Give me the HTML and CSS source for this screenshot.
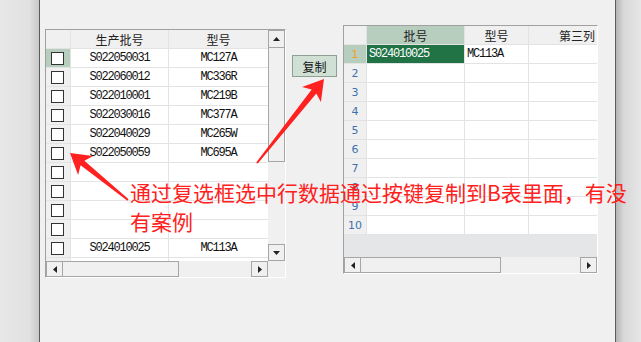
FILE: index.html
```html
<!DOCTYPE html>
<html lang="zh-CN">
<head>
    <meta charset="UTF-8">
    <meta name="viewport" content="width=device-width, initial-scale=1.0">
    <title>复制到B表</title>
    <link rel="stylesheet" href="styles.css">
</head>
<body>
<div class="shade-left"></div>
<div class="window">
    <!-- A表：带复选框 -->
    <div class="grid grid-a">
        <div class="grid-main">
            <div class="cells">
                <div class="row head">
                    <div class="rh"></div>
                    <div class="c c1">生产批号</div>
                    <div class="c c2">型号</div>
                </div>
                <div class="row">
                    <div class="rh current"><span class="chk"></span></div>
                    <div class="c c1 code">S022050031</div>
                    <div class="c c2 code">MC127A</div>
                </div>
                <div class="row">
                    <div class="rh"><span class="chk"></span></div>
                    <div class="c c1 code">S022060012</div>
                    <div class="c c2 code">MC336R</div>
                </div>
                <div class="row">
                    <div class="rh"><span class="chk"></span></div>
                    <div class="c c1 code">S022010001</div>
                    <div class="c c2 code">MC219B</div>
                </div>
                <div class="row">
                    <div class="rh"><span class="chk"></span></div>
                    <div class="c c1 code">S022030016</div>
                    <div class="c c2 code">MC377A</div>
                </div>
                <div class="row">
                    <div class="rh"><span class="chk"></span></div>
                    <div class="c c1 code">S022040029</div>
                    <div class="c c2 code">MC265W</div>
                </div>
                <div class="row">
                    <div class="rh"><span class="chk"></span></div>
                    <div class="c c1 code">S022050059</div>
                    <div class="c c2 code">MC695A</div>
                </div>
                <div class="row">
                    <div class="rh"><span class="chk"></span></div>
                    <div class="c c1"></div>
                    <div class="c c2"></div>
                </div>
                <div class="row">
                    <div class="rh"><span class="chk"></span></div>
                    <div class="c c1"></div>
                    <div class="c c2"></div>
                </div>
                <div class="row">
                    <div class="rh"><span class="chk"></span></div>
                    <div class="c c1"></div>
                    <div class="c c2"></div>
                </div>
                <div class="row">
                    <div class="rh"><span class="chk"></span></div>
                    <div class="c c1"></div>
                    <div class="c c2"></div>
                </div>
                <div class="row">
                    <div class="rh"><span class="chk"></span></div>
                    <div class="c c1 code">S024010025</div>
                    <div class="c c2 code">MC113A</div>
                </div>
                <div class="row">
                    <div class="rh"><span class="chk"></span></div>
                    <div class="c c1"></div>
                    <div class="c c2"></div>
                </div>
            </div>
            <div class="vscroll">
                <div class="sbtn up"><svg width="7" height="4"><polygon points="0,4 7,4 3.5,0" fill="#222"/></svg></div>
                <div class="vthumb"></div>
                <div class="vtrack"></div>
                <div class="sbtn down"><svg width="7" height="4"><polygon points="0,0 7,0 3.5,4" fill="#222"/></svg></div>
            </div>
        </div>
        <div class="hbar">
            <div class="hscroll">
                <div class="sbtn side"><svg width="4" height="7"><polygon points="4,0 4,7 0,3.5" fill="#222"/></svg></div>
                <div class="hthumb"></div>
                <div class="htrack"></div>
                <div class="sbtn side"><svg width="4" height="7"><polygon points="0,0 0,7 4,3.5" fill="#222"/></svg></div>
            </div>
            <div class="corner"></div>
        </div>
    </div>

    <button class="copy-btn">复制</button>

    <!-- B表 -->
    <div class="grid grid-b">
        <div class="grid-main">
            <div class="cells">
                <div class="row head">
                    <div class="rh"></div>
                    <div class="c c1 sel-col">批号</div>
                    <div class="c c2">型号</div>
                    <div class="c c3">第三列</div>
                </div>
                <div class="row">
                    <div class="rh num current">1</div>
                    <div class="c c1 code left active">S024010025</div>
                    <div class="c c2 code left">MC113A</div>
                    <div class="c c3"></div>
                </div>
                <div class="row"><div class="rh num">2</div><div class="c c1"></div><div class="c c2"></div><div class="c c3"></div></div>
                <div class="row"><div class="rh num">3</div><div class="c c1"></div><div class="c c2"></div><div class="c c3"></div></div>
                <div class="row"><div class="rh num">4</div><div class="c c1"></div><div class="c c2"></div><div class="c c3"></div></div>
                <div class="row"><div class="rh num">5</div><div class="c c1"></div><div class="c c2"></div><div class="c c3"></div></div>
                <div class="row"><div class="rh num">6</div><div class="c c1"></div><div class="c c2"></div><div class="c c3"></div></div>
                <div class="row"><div class="rh num">7</div><div class="c c1"></div><div class="c c2"></div><div class="c c3"></div></div>
                <div class="row"><div class="rh num">8</div><div class="c c1"></div><div class="c c2"></div><div class="c c3"></div></div>
                <div class="row"><div class="rh num">9</div><div class="c c1"></div><div class="c c2"></div><div class="c c3"></div></div>
                <div class="row"><div class="rh num">10</div><div class="c c1"></div><div class="c c2"></div><div class="c c3"></div></div>
            </div>
        </div>
        <div class="hbar">
            <div class="hscroll">
                <div class="sbtn side"><svg width="4" height="7"><polygon points="4,0 4,7 0,3.5" fill="#222"/></svg></div>
                <div class="hthumb"></div>
                <div class="htrack"></div>
                <div class="sbtn side"><svg width="4" height="7"><polygon points="0,0 0,7 4,3.5" fill="#222"/></svg></div>
            </div>
        </div>
    </div>
</div>
<div class="shade-right"></div>

<div class="note">通过复选框选中行数据通过按键复制到B表里面，有没<br>有案例</div>
<svg class="arrows" width="641" height="342">
    <polygon points="70,153 93.1,156.1 84.4,160.7 128.6,199.2 127.4,200.8 80.6,165.3 78.1,174.9" fill="#ff2020"/>
    <polygon points="324,79 320.9,102.1 316.3,93.4 257.8,163.6 256.2,162.4 311.7,89.6 302.1,87.1" fill="#ff2020"/>
</svg>
</body>
</html>
```

FILE: styles.css
```css
/* 页面 */
body {
    position: relative;
    margin: 0;
    width: 641px;
    height: 342px;
    display: flex;
    overflow: hidden;
    background: #f0f0f0;
    font-family: "Noto Sans CJK SC", sans-serif;
    color: #222222;
}

.shade-left {
    width: 39px;
    background: linear-gradient(to right, #e7e7e7 0, #e1e1e1 75%, #c8c8c8 100%);
}

.shade-right {
    width: 25px;
    background: linear-gradient(to right, #b4b4b4 0, #d8d8d8 30%, #e6e6e6 100%);
}

.window {
    width: 575px;
    border-left: 1px solid #5c5c5c;
    border-right: 1px solid #5c5c5c;
    display: flex;
    align-items: flex-start;
}

/* 表格 */
.grid {
    display: flex;
    flex-direction: column;
    border-top: 1px solid #a0a0a0;
    border-left: 1px solid #a0a0a0;
    border-right: 1px solid #ffffff;
    border-bottom: 1px solid #ffffff;
}

.grid-a {
    margin: 29px 0 0 5px;
}

.grid-b {
    margin: 25px 0 0 6px;
}

.grid-main {
    display: flex;
    height: 231px;
}

.cells {
    overflow: hidden;
    background: #ffffff;
}

.grid-a .cells {
    width: 222px;
}

.grid-b .cells {
    width: 253px;
    background: #e5e6e8;
}

.row {
    display: flex;
    height: 19px;
    box-sizing: border-box;
    border-bottom: 1px solid #e3e3e3;
    background: #ffffff;
}

.row.head {
    background: #f0f0f0;
    font-size: 12px;
}

.rh, .c {
    flex-shrink: 0;
    box-sizing: border-box;
    border-right: 1px solid #e3e3e3;
    display: flex;
    align-items: center;
    justify-content: center;
    white-space: nowrap;
    overflow: hidden;
}

.rh {
    background: #f0f0f0;
}

.rh.current {
    background: #b7cebf;
}

.grid-a .rh { width: 25px; }
.grid-a .c1 { width: 98px; }
.grid-a .c2 { width: 100px; }

.grid-b .rh { width: 23px; }
.grid-b .c1 { width: 98px; }
.grid-b .c2 { width: 64px; }
.grid-b .c3 { width: 97px; }

.sel-col {
    background: #b7cebf;
}

.chk {
    width: 13px;
    height: 13px;
    box-sizing: border-box;
    border: 1px solid #333333;
    background: #ffffff;
    margin-left: -1px;
}

.code {
    font-family: "Liberation Mono", monospace;
    font-size: 12px;
    letter-spacing: -1.2px;
    color: #111111;
}

.left {
    justify-content: flex-start;
    padding-left: 2px;
}

.active {
    background: #217346;
    color: #ffffff;
}

.num {
    font-family: "DejaVu Sans", sans-serif;
    font-size: 11px;
    color: #3f72ad;
}

.num.current {
    color: #f2a01c;
}

/* 滚动条 */
.sbtn {
    box-sizing: border-box;
    border: 1px solid #a6a6a6;
    background: #f0f0f0;
    display: flex;
    align-items: center;
    justify-content: center;
    flex-shrink: 0;
}

.vscroll {
    width: 17px;
    display: flex;
    flex-direction: column;
    background: #f0f0f0;
}

.vscroll .up {
    height: 18px;
}

.vscroll .down {
    height: 17px;
}

.vthumb {
    height: 114px;
    box-sizing: border-box;
    border: 1px solid #a6a6a6;
    border-top: none;
}

.vtrack {
    flex: 1;
}

.hbar {
    display: flex;
    height: 16px;
}

.hscroll {
    display: flex;
    background: #f0f0f0;
}

.grid-a .hscroll {
    width: 222px;
}

.grid-b .hscroll {
    width: 253px;
}

.sbtn.side {
    width: 17px;
}

.hthumb {
    box-sizing: border-box;
    border: 1px solid #a6a6a6;
    border-left: none;
}

.grid-a .hthumb {
    width: 116px;
}

.grid-b .hthumb {
    width: 140px;
}

.htrack {
    flex: 1;
}

.corner {
    width: 17px;
    background: #f0f0f0;
}

/* 复制按钮 */
.copy-btn {
    margin: 55px 0 0 6px;
    width: 45px;
    height: 22px;
    padding: 0;
    box-sizing: border-box;
    border: 1px solid #8e9f94;
    background: #d0e0d4;
    font-family: "Noto Sans CJK SC", sans-serif;
    font-size: 12px;
    color: #111111;
}

/* 批注 */
.note {
    position: absolute;
    left: 130px;
    top: 178px;
    font-size: 21px;
    line-height: 29px;
    color: #ff2020;
    white-space: nowrap;
}

.arrows {
    position: absolute;
    left: 0;
    top: 0;
    pointer-events: none;
}
```
